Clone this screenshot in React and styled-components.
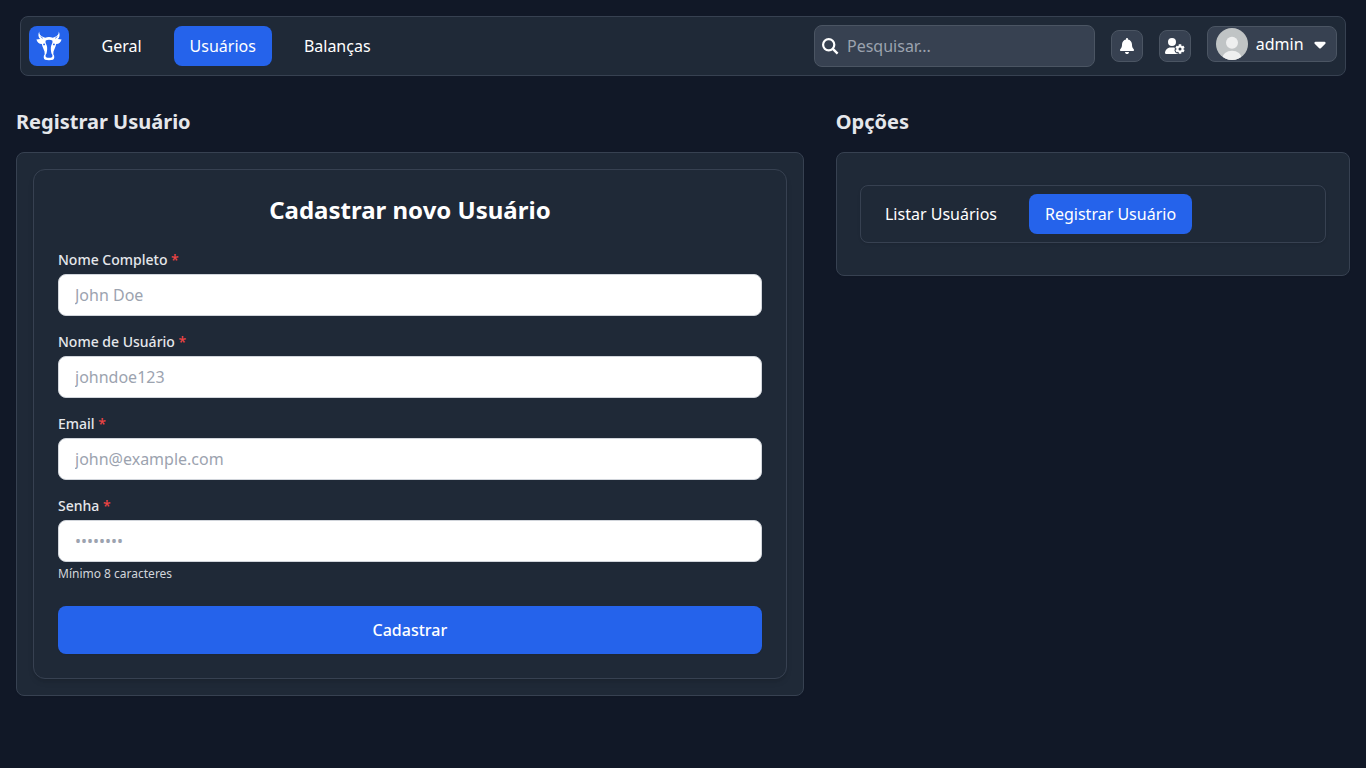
import React from "react";
import styled, { createGlobalStyle, css } from "styled-components";
import { FaBell, FaUserGear, FaCaretDown } from "react-icons/fa6";

const GlobalStyle = createGlobalStyle`
  *, *::before, *::after { box-sizing: border-box; }
  body {
    margin: 0;
    background: #111827;
    color: #fff;
    font-family: "Noto Sans", sans-serif;
    font-size: 16px;
    line-height: 24px;
  }
  h1, h2, p { margin: 0; }
  button, input { font: inherit; }
  svg { display: block; flex: none; }
`;

const Page = styled.div`
  min-height: 100vh;
  padding: 16px;
`;

const TopBar = styled.header`
  display: flex;
  align-items: center;
  gap: 16px;
  height: 60px;
  margin: 0 4px;
  padding: 8px;
  border: 1px solid #374151;
  border-radius: 8px;
  background: #1f2937;
`;

const Logo = styled.div`
  display: grid;
  place-items: center;
  width: 40px;
  height: 40px;
  border-radius: 8px;
  background: #2563eb;
`;

const Nav = styled.nav`
  display: flex;
  gap: 16px;
  margin-left: 0.5px;
`;

const NavButton = styled.button`
  height: 40px;
  padding: 8px 16px;
  border: 0;
  border-radius: 8px;
  color: #fff;
  background: ${(p) => (p.$active ? "#2563eb" : "transparent")};
`;

const controlSurface = css`
  border: 1px solid #4b5563;
  border-radius: 8px;
  background: #374151;
`;

const Search = styled.label`
  ${controlSurface}
  display: flex;
  align-items: center;
  gap: 8px;
  width: 281px;
  height: 42px;
  margin-left: auto;
  padding: 0 7px;
`;

const SearchInput = styled.input`
  flex: 1;
  min-width: 0;
  padding: 0;
  border: 0;
  outline: 0;
  color: #fff;
  background: transparent;
  &::placeholder { color: #9ca3af; }
`;

const IconButton = styled.button`
  ${controlSurface}
  display: grid;
  place-items: center;
  width: 32px;
  height: 32px;
  padding: 0;
  color: #fff;
`;

const Account = styled.button`
  ${controlSurface}
  display: flex;
  align-items: center;
  width: 130px;
  height: 36px;
  margin-bottom: 4px;
  padding: 0 8px;
  color: #fff;
`;

const AccountName = styled.span`
  margin: 0 7px 0 7.8px;
`;

const Columns = styled.main`
  display: grid;
  grid-template-columns: 787.8px 1fr;
  gap: 32px;
  align-items: start;
  margin-top: 32px;
`;

const SectionTitle = styled.h2`
  margin-bottom: 16px;
  font-size: 20px;
  font-weight: 700;
  line-height: 28px;
  color: #e5e7eb;
`;

const Card = styled.div`
  padding: ${(p) => p.$padding};
  border: 1px solid #374151;
  border-radius: 8px;
  background: #1f2937;
  box-shadow: 0 1px 2px rgba(0, 0, 0, 0.05);
`;

const Form = styled.form`
  padding: 24px;
  border: 1px solid #374151;
  border-radius: 12px;
  box-shadow: 0 4px 6px -1px rgba(0, 0, 0, 0.1), 0 2px 4px -2px rgba(0, 0, 0, 0.1);
`;

const FormTitle = styled.h1`
  margin-bottom: 24px;
  text-align: center;
  font-size: 24px;
  font-weight: 700;
  line-height: 32px;
`;

const Fields = styled.div`
  display: flex;
  flex-direction: column;
  gap: 16px;
`;

const FieldLabel = styled.label`
  display: block;
  margin-bottom: 4px;
  font-size: 14px;
  font-weight: 500;
  line-height: 20px;
  color: #e5e7eb;
`;

const Required = styled.span`
  color: #ef4444;
`;

const FieldInput = styled.input`
  display: block;
  width: 100%;
  height: 42px;
  padding: 8px 16px;
  border: 1px solid #d1d5db;
  border-radius: 8px;
  color: #111827;
  background: #fff;
  &::placeholder { color: #9ca3af; }
`;

const Hint = styled.p`
  margin-top: 4px;
  font-size: 12px;
  line-height: 16px;
  color: #d1d5db;
`;

const Submit = styled.button`
  width: 100%;
  height: 48px;
  margin-top: 24px;
  padding: 0;
  border: 0;
  border-radius: 8px;
  font-weight: 500;
  color: #fff;
  background: #2563eb;
  box-shadow: 0 1px 2px rgba(0, 0, 0, 0.05);
`;

const OptionBar = styled.nav`
  display: flex;
  gap: 16px;
  padding: 8px;
  border: 1px solid #374151;
  border-radius: 8px;
  box-shadow: 0 1px 3px rgba(0, 0, 0, 0.1);
`;

const fields = [
  { id: "name", label: "Nome Completo", placeholder: "John Doe", type: "text" },
  { id: "username", label: "Nome de Usuário", placeholder: "johndoe123", type: "text" },
  { id: "email", label: "Email", placeholder: "john@example.com", type: "email" },
  { id: "password", label: "Senha", placeholder: "••••••••", type: "password", hint: "Mínimo 8 caracteres" },
];

function CowHead() {
  return (
    <svg width="40" height="40" viewBox="0 0 40 40" aria-hidden="true">
      <path
        fill="#fff"
        d="M10.2 5.4C10.1 8 11.2 9.8 14.2 11L16.2 11.7C18.5 10.9 21.5 10.9 23.8 11.7L25.8 11C28.8 9.8 29.9 8 29.8 5.4C31.2 8.6 30.7 11.2 28.8 13.1L32.6 13.4C32 16.2 30 17.8 27.2 18L26.5 20.5L24.5 25.5L24.3 28.2C25.7 29.7 25.6 32.8 24 33.7C22 34.3 18 34.3 16 33.7C14.4 32.8 14.3 29.7 15.7 28.2L15.5 25.5L13.5 20.5L12.8 18C10 17.8 8 16.2 7.4 13.4L11.2 13.1C9.3 11.2 8.8 8.6 10.2 5.4Z"
      />
      <path
        fill="#2563eb"
        d="M16.7 14.6C18.4 13.3 21.6 13.3 23.3 14.6C24 16.6 22.8 18.2 22.1 20C21.6 22.2 21.8 25.2 22.5 27.4C23.7 28.5 23.7 30.2 22.9 31.3C21.3 32 18.7 32 17.1 31.3C16.3 30.2 16.3 28.5 17.5 27.4C18.2 25.2 18.4 22.2 17.9 20C17.2 18.2 16 16.6 16.7 14.6Z"
      />
      <circle cx="15.1" cy="18.4" r="0.95" fill="#2563eb" />
      <circle cx="24.9" cy="18.4" r="0.95" fill="#2563eb" />
      <path d="M11.7 10.6L13.8 12.3M28.3 10.6L26.2 12.3" stroke="#2563eb" strokeWidth="0.8" />
    </svg>
  );
}

function SearchIcon() {
  return (
    <svg width="17" height="17" viewBox="0 0 17 17" fill="none" stroke="currentColor" aria-hidden="true">
      <circle cx="6.7" cy="6.7" r="5.6" strokeWidth="2.2" />
      <path d="M10.6 10.6L15.6 15.6" strokeWidth="2.4" />
    </svg>
  );
}

function Avatar() {
  return (
    <svg width="32" height="32" viewBox="0 0 32 32" aria-hidden="true">
      <defs>
        <clipPath id="avatar-circle"><circle cx="16" cy="16" r="16" /></clipPath>
      </defs>
      <g clipPath="url(#avatar-circle)">
        <rect width="32" height="32" fill="#c0c4c5" />
        <circle cx="16" cy="14.7" r="6" fill="#eeefef" />
        <ellipse cx="16" cy="30.5" rx="9.8" ry="7.7" fill="#eeefef" />
      </g>
    </svg>
  );
}

export default function App() {
  return (
    <Page>
      <GlobalStyle />
      <TopBar>
        <Logo><CowHead /></Logo>
        <Nav>
          <NavButton>Geral</NavButton>
          <NavButton $active>Usuários</NavButton>
          <NavButton>Balanças</NavButton>
        </Nav>
        <Search>
          <SearchIcon />
          <SearchInput placeholder="Pesquisar..." />
        </Search>
        <IconButton aria-label="Notificações"><FaBell size={16} /></IconButton>
        <IconButton aria-label="Conta"><FaUserGear size={20} /></IconButton>
        <Account>
          <Avatar />
          <AccountName>admin</AccountName>
          <FaCaretDown size={18} />
        </Account>
      </TopBar>
      <Columns>
        <section>
          <SectionTitle>Registrar Usuário</SectionTitle>
          <Card $padding="16px">
            <Form>
              <FormTitle>Cadastrar novo Usuário</FormTitle>
              <Fields>
                {fields.map((f) => (
                  <div key={f.id}>
                    <FieldLabel htmlFor={f.id}>
                      {f.label} <Required>*</Required>
                    </FieldLabel>
                    <FieldInput id={f.id} type={f.type} placeholder={f.placeholder} />
                    {f.hint && <Hint>{f.hint}</Hint>}
                  </div>
                ))}
              </Fields>
              <Submit type="button">Cadastrar</Submit>
            </Form>
          </Card>
        </section>
        <section>
          <SectionTitle>Opções</SectionTitle>
          <Card $padding="32px 23.2px">
            <OptionBar>
              <NavButton>Listar Usuários</NavButton>
              <NavButton $active>Registrar Usuário</NavButton>
            </OptionBar>
          </Card>
        </section>
      </Columns>
    </Page>
  );
}
